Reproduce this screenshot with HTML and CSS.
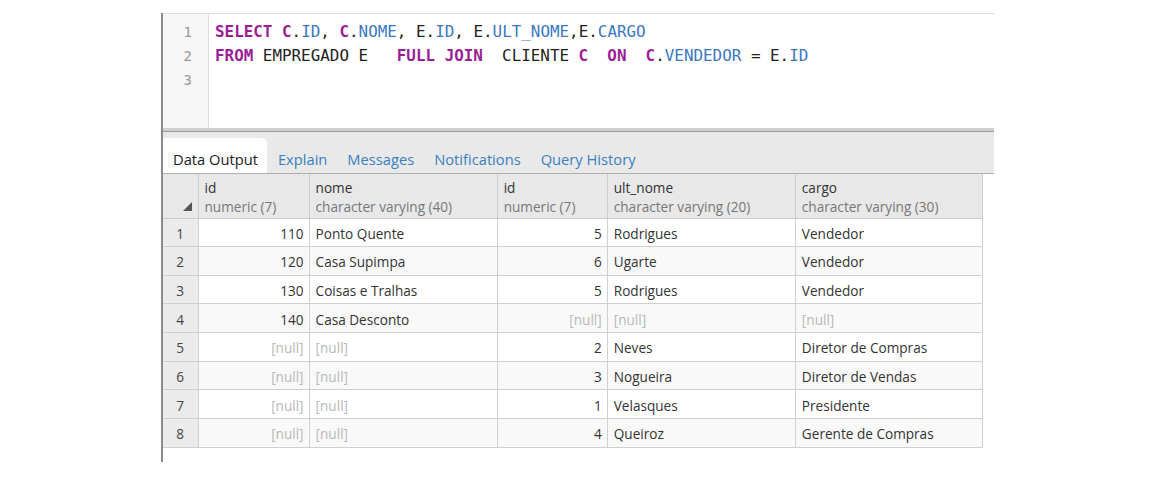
FILE: index.html
```html
<!DOCTYPE html>
<html>
<head>
<meta charset="utf-8">
<link rel="stylesheet" href="styles.css">
</head>
<body>
<div class="panel">
  <div class="editor">
    <div class="gutter">
      <div class="ln">1</div>
      <div class="ln">2</div>
      <div class="ln">3</div>
    </div>
    <div class="code">
      <div class="line"><span class="kw">SELECT</span> <span class="kw">C</span>.<span class="id">ID</span>, <span class="kw">C</span>.<span class="id">NOME</span>, E.<span class="id">ID</span>, E.<span class="id">ULT_NOME</span>,E.<span class="id">CARGO</span></div>
      <div class="line"><span class="kw">FROM</span> EMPREGADO E   <span class="kw">FULL</span> <span class="kw">JOIN</span>  CLIENTE <span class="kw">C</span>  <span class="kw">ON</span>  <span class="kw">C</span>.<span class="id">VENDEDOR</span> = E.<span class="id">ID</span></div>
      <div class="line"></div>
    </div>
  </div>
  <div class="splitter"></div>
  <div class="tabs">
    <div class="tab active">Data Output</div>
    <div class="tab">Explain</div>
    <div class="tab">Messages</div>
    <div class="tab">Notifications</div>
    <div class="tab">Query History</div>
  </div>
  <table class="grid">
    <colgroup>
      <col class="c0"><col class="c1"><col class="c2"><col class="c3"><col class="c4"><col class="c5">
    </colgroup>
    <thead>
      <tr>
        <th class="corner"><span class="tri"></span></th>
        <th><div class="hn">id</div><div class="ht">numeric (7)</div></th>
        <th><div class="hn">nome</div><div class="ht">character varying (40)</div></th>
        <th><div class="hn">id</div><div class="ht">numeric (7)</div></th>
        <th><div class="hn">ult_nome</div><div class="ht">character varying (20)</div></th>
        <th><div class="hn">cargo</div><div class="ht">character varying (30)</div></th>
      </tr>
    </thead>
    <tbody>
      <tr><td class="rn">1</td><td class="num">110</td><td>Ponto Quente</td><td class="num">5</td><td>Rodrigues</td><td>Vendedor</td></tr>
      <tr><td class="rn">2</td><td class="num">120</td><td>Casa Supimpa</td><td class="num">6</td><td>Ugarte</td><td>Vendedor</td></tr>
      <tr><td class="rn">3</td><td class="num">130</td><td>Coisas e Tralhas</td><td class="num">5</td><td>Rodrigues</td><td>Vendedor</td></tr>
      <tr><td class="rn">4</td><td class="num">140</td><td>Casa Desconto</td><td class="num null">[null]</td><td class="null">[null]</td><td class="null">[null]</td></tr>
      <tr><td class="rn">5</td><td class="num null">[null]</td><td class="null">[null]</td><td class="num">2</td><td>Neves</td><td>Diretor de Compras</td></tr>
      <tr><td class="rn">6</td><td class="num null">[null]</td><td class="null">[null]</td><td class="num">3</td><td>Nogueira</td><td>Diretor de Vendas</td></tr>
      <tr><td class="rn">7</td><td class="num null">[null]</td><td class="null">[null]</td><td class="num">1</td><td>Velasques</td><td>Presidente</td></tr>
      <tr><td class="rn">8</td><td class="num null">[null]</td><td class="null">[null]</td><td class="num">4</td><td>Queiroz</td><td>Gerente de Compras</td></tr>
    </tbody>
  </table>
</div>
</body>
</html>
```

FILE: styles.css
```css
html, body {
  margin: 0;
  padding: 0;
  background: #ffffff;
}

.panel {
  margin: 13px 0 0 161px;
  width: 833px;
  height: 449px;
  border-left: 2px solid #8c8c8c;
  box-sizing: border-box;
  font-family: "Open Sans", "Liberation Sans", sans-serif;
}

.editor {
  display: flex;
  height: 115px;
  border-top: 1px solid #dddddd;
  box-sizing: border-box;
}

.gutter {
  width: 46px;
  flex: none;
  background: #f7f7f7;
  border-right: 1px solid #dddddd;
  box-sizing: border-box;
  padding-top: 6px;
}

.ln {
  height: 24px;
  line-height: 24px;
  text-align: right;
  padding-right: 16px;
  font-family: "DejaVu Sans Mono", monospace;
  font-size: 14px;
  color: #999999;
}

.code {
  padding: 6px 0 0 6px;
  font-family: "DejaVu Sans Mono", monospace;
  font-size: 15.9px;
  color: #222222;
}

.line {
  height: 24px;
  line-height: 24px;
  white-space: pre;
}

.kw {
  color: #9a1e96;
  font-weight: bold;
}

.id {
  color: #3a78c0;
}

.splitter {
  height: 4px;
  background: #cfcfcf;
  border-bottom: 1px solid #9a9a9a;
  box-sizing: border-box;
}

.tabs {
  display: flex;
  align-items: flex-end;
  height: 42px;
  background: #e9e9e9;
  border-bottom: 1px solid #b0b0b0;
  box-sizing: border-box;
}

.tab {
  height: 35px;
  line-height: 43px;
  padding: 0 10px;
  margin-right: 0;
  font-size: 14.7px;
  color: #3a7fc1;
  box-sizing: border-box;
}

.tab.active {
  background: #ffffff;
  color: #222222;
  border-top-right-radius: 5px;
  padding: 0 9px 0 10px;
  margin-right: 1px;
}

.grid {
  border-collapse: collapse;
  table-layout: fixed;
  width: 820px;
  font-size: 13.6px;
  color: #333333;
}

.c0 { width: 35px; }
.c1 { width: 111px; }
.c2 { width: 188px; }
.c3 { width: 110px; }
.c4 { width: 188px; }
.c5 { width: 187px; }

.grid th {
  height: 44px;
  background: #e8e8e8;
  border: 1px solid #cccccc;
  border-top: none;
  text-align: left;
  vertical-align: top;
  font-weight: normal;
  padding: 4px 6px 0 6px;
  box-sizing: border-box;
}

.grid th.corner {
  position: relative;
  border-left: none;
}

.tri {
  position: absolute;
  right: 6px;
  bottom: 7px;
  width: 0;
  height: 0;
  border-left: 9px solid transparent;
  border-bottom: 9px solid #555555;
}

.hn {
  font-size: 13.6px;
  color: #333333;
  line-height: 19px;
}

.ht {
  font-size: 13.6px;
  color: #777777;
  line-height: 20px;
}

.grid td {
  height: 28.65px;
  padding: 2px 5px 0 6px;
  border: 1px solid #d0d0d0;
  white-space: nowrap;
  overflow: hidden;
  box-sizing: border-box;
  line-height: 25px;
}

.grid tbody tr:nth-child(even) td {
  background: #f9f9f9;
}

.grid td.rn,
.grid tbody tr:nth-child(even) td.rn {
  background: #ebebeb;
  text-align: center;
  border-left: none;
  padding: 2px 0 0 0;
  color: #444444;
}

.grid td.num {
  text-align: right;
}

.grid td.null {
  color: #b8b8b8;
}
```
